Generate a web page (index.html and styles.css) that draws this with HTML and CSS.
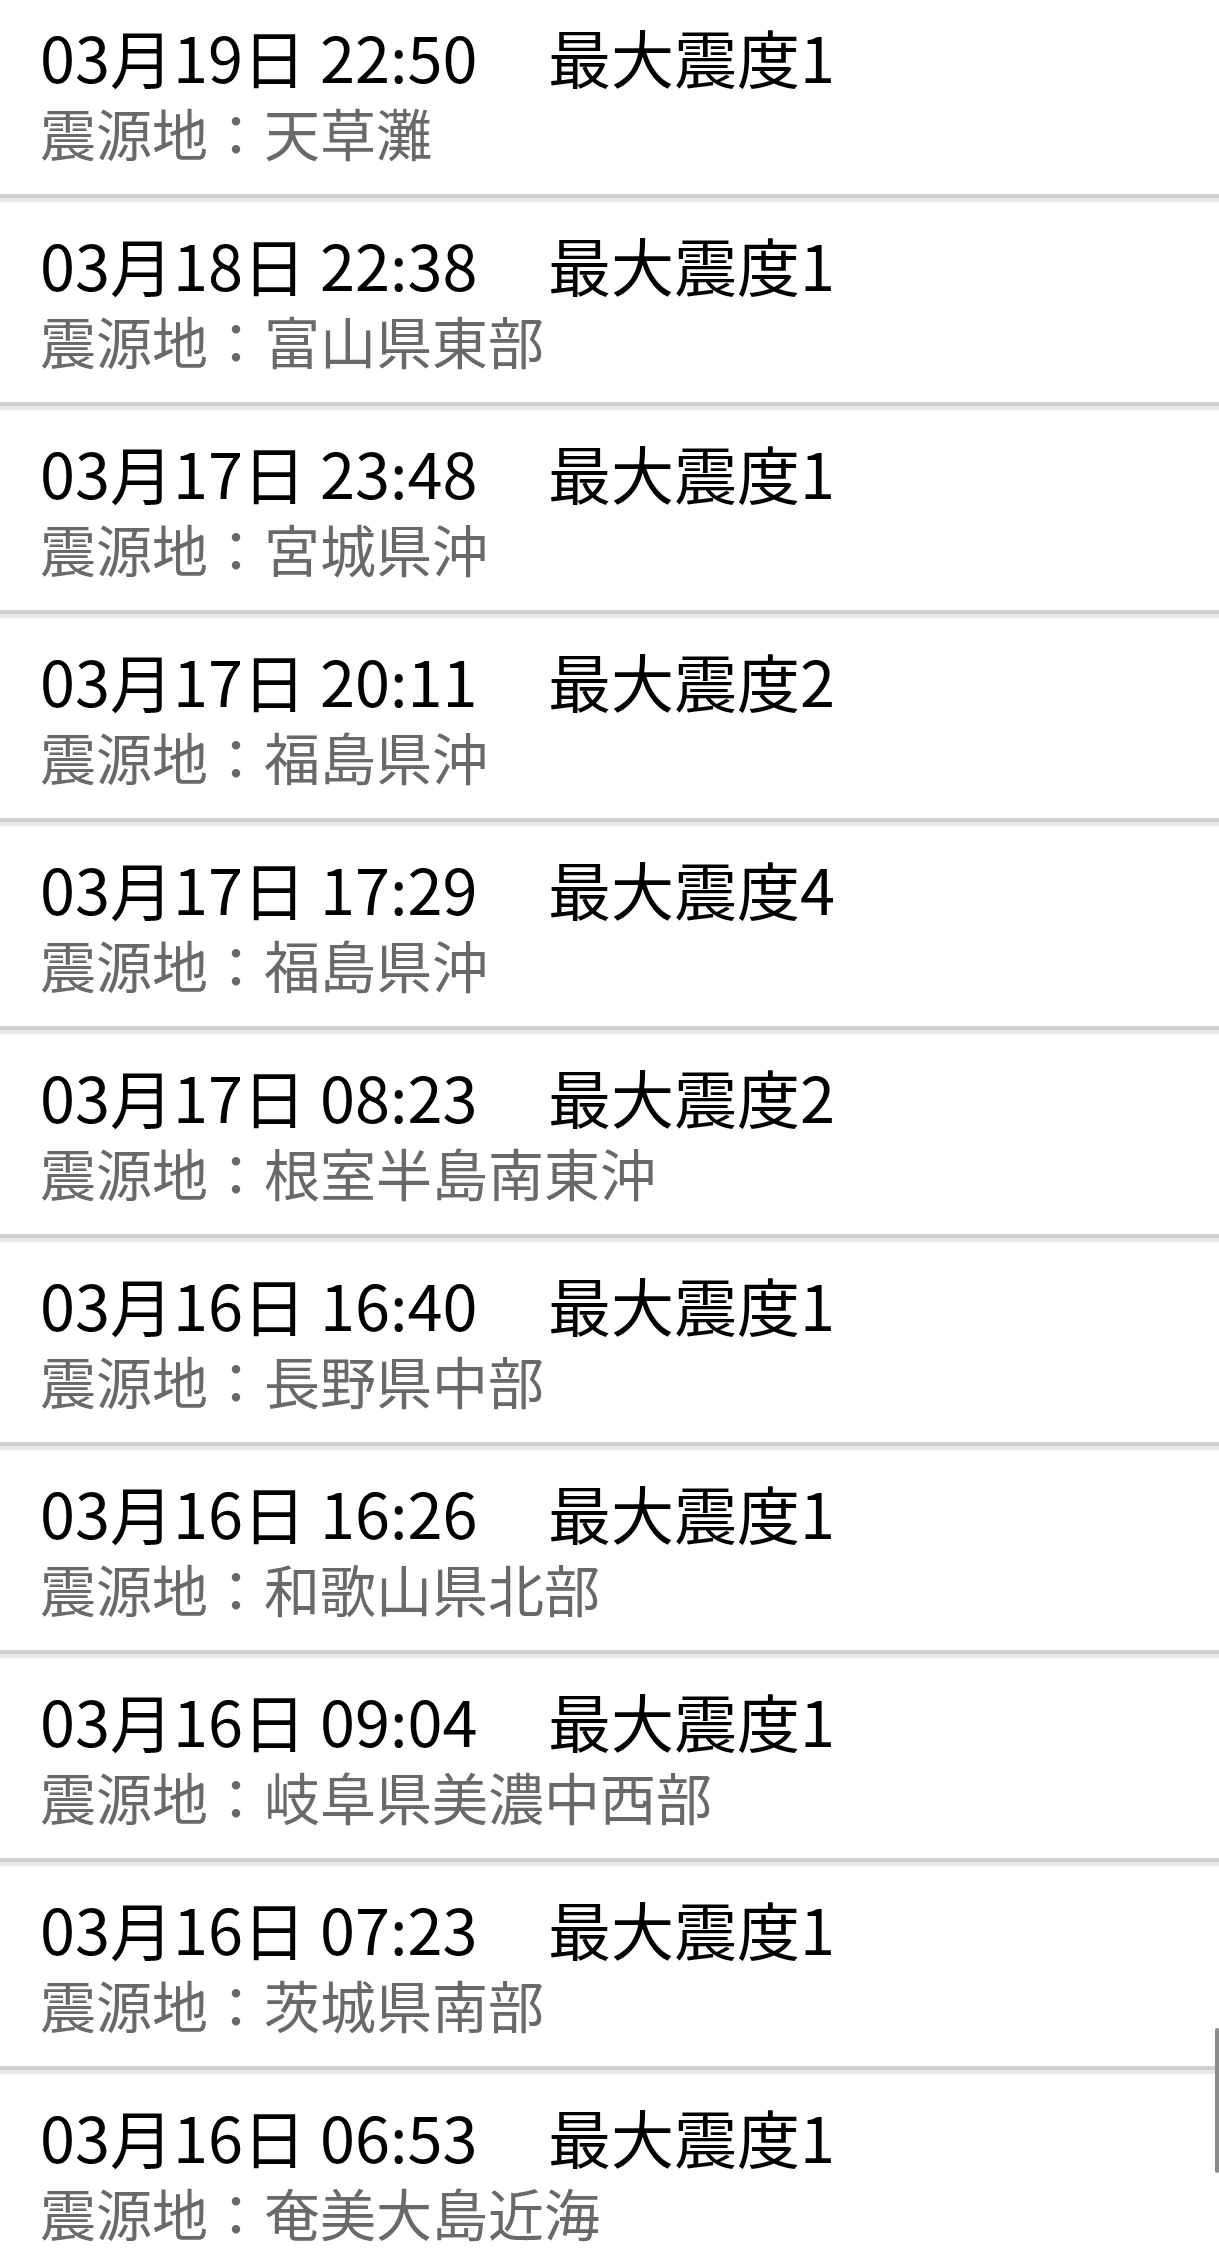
FILE: index.html
```html
<!DOCTYPE html>
<html lang="ja">
<head>
    <meta charset="UTF-8">
    <meta name="viewport" content="width=device-width, initial-scale=1.0">
    <title>地震情報</title>
    <link rel="stylesheet" href="styles.css">
</head>
<body>
    <ul class="quake-list">
        <li class="quake-item">
            <div class="quake-head"><span class="quake-time">03月19日 22:50</span><span class="quake-scale">最大震度1</span></div>
            <div class="quake-place">震源地：天草灘</div>
        </li>
        <li class="quake-item">
            <div class="quake-head"><span class="quake-time">03月18日 22:38</span><span class="quake-scale">最大震度1</span></div>
            <div class="quake-place">震源地：富山県東部</div>
        </li>
        <li class="quake-item">
            <div class="quake-head"><span class="quake-time">03月17日 23:48</span><span class="quake-scale">最大震度1</span></div>
            <div class="quake-place">震源地：宮城県沖</div>
        </li>
        <li class="quake-item">
            <div class="quake-head"><span class="quake-time">03月17日 20:11</span><span class="quake-scale">最大震度2</span></div>
            <div class="quake-place">震源地：福島県沖</div>
        </li>
        <li class="quake-item">
            <div class="quake-head"><span class="quake-time">03月17日 17:29</span><span class="quake-scale">最大震度4</span></div>
            <div class="quake-place">震源地：福島県沖</div>
        </li>
        <li class="quake-item">
            <div class="quake-head"><span class="quake-time">03月17日 08:23</span><span class="quake-scale">最大震度2</span></div>
            <div class="quake-place">震源地：根室半島南東沖</div>
        </li>
        <li class="quake-item">
            <div class="quake-head"><span class="quake-time">03月16日 16:40</span><span class="quake-scale">最大震度1</span></div>
            <div class="quake-place">震源地：長野県中部</div>
        </li>
        <li class="quake-item">
            <div class="quake-head"><span class="quake-time">03月16日 16:26</span><span class="quake-scale">最大震度1</span></div>
            <div class="quake-place">震源地：和歌山県北部</div>
        </li>
        <li class="quake-item">
            <div class="quake-head"><span class="quake-time">03月16日 09:04</span><span class="quake-scale">最大震度1</span></div>
            <div class="quake-place">震源地：岐阜県美濃中西部</div>
        </li>
        <li class="quake-item">
            <div class="quake-head"><span class="quake-time">03月16日 07:23</span><span class="quake-scale">最大震度1</span></div>
            <div class="quake-place">震源地：茨城県南部</div>
        </li>
        <li class="quake-item">
            <div class="quake-head"><span class="quake-time">03月16日 06:53</span><span class="quake-scale">最大震度1</span></div>
            <div class="quake-place">震源地：奄美大島近海</div>
        </li>
    </ul>
    <div class="scrollbar"></div>
</body>
</html>
```
FILE: styles.css
```css
body {
    margin: 0;
    background: #fff;
    font-family: "Noto Sans CJK JP", "Noto Sans", sans-serif;
    overflow: hidden;
}
.quake-list {
    list-style: none;
    margin: -6px 0 0;
    padding: 0;
}
.quake-item {
    height: 200px;
    box-sizing: content-box;
    padding: 0 0 0 40px;
    border-bottom: 4px solid #d0d0d0;
}
.quake-item + .quake-item {
    border-top: 4px solid #e9e9e9;
}
.quake-head {
    display: flex;
    padding-top: 24px;
    font-size: 63px;
    line-height: 76px;
    color: #000;
}
.quake-time {
    width: 508px;
    flex: none;
}
.quake-place {
    font-size: 56px;
    line-height: 76px;
    color: #696969;
}
.scrollbar {
    position: fixed;
    right: 0;
    top: 2028px;
    width: 4px;
    height: 145px;
    border-radius: 2px;
    background: #8a8a8a;
}
```
